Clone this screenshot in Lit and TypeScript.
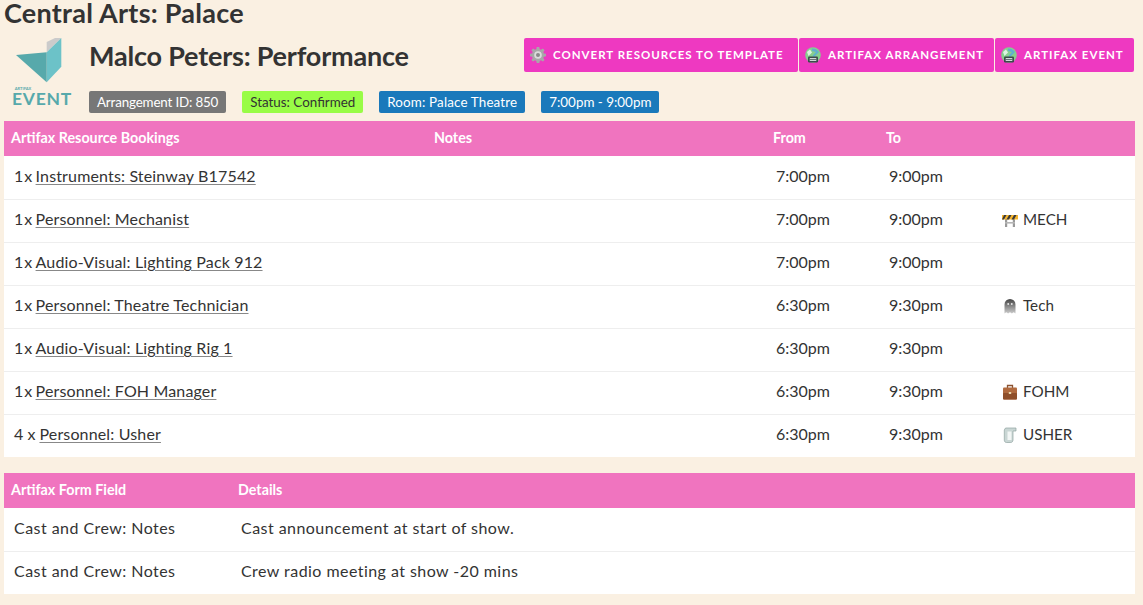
import { LitElement, html, css } from 'lit'
import { customElement } from 'lit/decorators.js'

const gear = html`<svg class="ico" viewBox="0 0 16 16"><path fill="#a8a8a8" d="M6.700 0h2.600l.4 2.200 1.300.6L12.900 1.500l1.700 1.700-1.300 1.900.6 1.300 2.100.4v2.500l-2.100.4-.6 1.300 1.300 1.900-1.700 1.700-1.900-1.300-1.300.6-.4 2.100H6.700l-.4-2.100-1.300-.6-1.900 1.300-1.700-1.700 1.300-1.900-.6-1.300L0 9.300V6.800l2.100-.4.6-1.300-1.300-1.900 1.700-1.700L5 2.800l1.300-.6z"/><circle cx="8" cy="8" r="3.800" fill="#dcdcdc"/><circle cx="8" cy="8" r="2" fill="#8a8a8a"/></svg>`

const globe = html`<svg class="ico" viewBox="0 0 16 16"><circle cx="8" cy="8" r="7.800" fill="#86cf8e"/><path fill="#5fb0cf" d="M7 1.500c3 0 5 1 7 3.500l-5 5-1.500-1L11 5 7 4z"/><path fill="#dff3e2" d="M2 5l3-2.500 2 3L3.500 9z"/><rect x="3" y="9.500" width="10" height="6" rx="1.200" fill="#3c4a4c"/><rect x="4.700" y="11" width="6.600" height="3" fill="#d0d8d8"/><path stroke="#3c4a4c" stroke-width=".7" d="M4.700 12.500h6.600"/></svg>`

const barrier = html`<svg class="emo" viewBox="0 0 16 16"><rect x="3" y="5" width="2.200" height="10" fill="#9a9a9a"/><rect x="10.800" y="5" width="2.200" height="10" fill="#9a9a9a"/><rect x="3" y="10" width="10" height="1.600" fill="#b5b5b5"/><rect x="0" y="3" width="16" height="4.500" fill="#f5b52e"/><path fill="#3a3a3a" d="M2 3h2.500L2 7.500H0zM7 3h2.500L7 7.500H4.500zM12 3h2.500L12 7.500H9.500z"/></svg>`

const ghost = html`<svg class="emo" viewBox="0 0 16 16"><defs><linearGradient id="gh" x1="0" x2="0" y1="0" y2="1"><stop offset="0" stop-color="#444"/><stop offset="1" stop-color="#ccc"/></linearGradient></defs><path fill="url(#gh)" d="M2.500 15.500V6.500a5.500 5.500 0 0 1 11 0v9l-1.800-1.200-1.800 1.200L8 14.300l-1.900 1.200-1.800-1.200z"/><circle cx="6.200" cy="6" r=".9" fill="#eee"/><circle cx="9.800" cy="6" r=".9" fill="#eee"/></svg>`

const briefcase = html`<svg class="emo" viewBox="0 0 16 16"><path fill="none" stroke="#8a5230" stroke-width="1.300" d="M5.500 4V1.500h5V4"/><rect x="1" y="3.500" width="14" height="12" rx="1" fill="#b06a3e"/><rect x="1" y="9" width="14" height="6.500" rx="1" fill="#8f4f2a"/><rect x="6.800" y="8" width="2.400" height="2" fill="#e8d9b0"/></svg>`

const scroll = html`<svg class="emo" viewBox="0 0 16 16"><path fill="#c9d6d4" stroke="#8fa3a0" stroke-width=".7" d="M3.500 1h10.500v3h-3v9c0 1.400-1 2.500-2.200 2.500H4.500c-1.300 0-2.200-1-2.200-2.300V3z"/><path fill="#f2f6f5" d="M5.500 4.500h4v8.500h-4z"/></svg>`

const logo = html`<svg viewBox="0 0 46 45" width="46" height="45">
  <path fill="#cbcbcb" d="M30.700 4L39 0h6.300L30.700 14.300z"/>
  <path fill="#6cc2c8" d="M45.300 0L30.700 14.300v30l14.600-15.600z"/>
  <path fill="#57a9ab" d="M0 17l30.700-2.700v30z"/>
</svg>`

const bookings: [string, string, string, string, unknown, string][] = [
  ['1 x', 'Instruments: Steinway B17542', '7:00pm', '9:00pm', null, ''],
  ['1 x', 'Personnel: Mechanist', '7:00pm', '9:00pm', barrier, 'MECH'],
  ['1 x', 'Audio-Visual: Lighting Pack 912', '7:00pm', '9:00pm', null, ''],
  ['1 x', 'Personnel: Theatre Technician', '6:30pm', '9:30pm', ghost, 'Tech'],
  ['1 x', 'Audio-Visual: Lighting Rig 1', '6:30pm', '9:30pm', null, ''],
  ['1 x', 'Personnel: FOH Manager', '6:30pm', '9:30pm', briefcase, 'FOHM'],
  ['4 x', 'Personnel: Usher', '6:30pm', '9:30pm', scroll, 'USHER'],
]

const fields = [
  ['Cast and Crew: Notes', 'Cast announcement at start of show.'],
  ['Cast and Crew: Notes', 'Crew radio meeting at show -20 mins'],
]

@customElement('app-root')
export class AppRoot extends LitElement {
  static styles = css`
    :host {
      display: block;
      min-height: 605px;
      background: #faf0e2;
      color: #333;
      font-family: Lato, "Noto Sans", sans-serif;
      overflow: hidden;
    }
    h1 {
      margin: 0 0 2px;
      padding-left: 4px;
      font-size: 27px;
      line-height: 25px;
      letter-spacing: 0.25px;
      font-weight: 700;
    }
    .head {
      display: flex;
      height: 94px;
      margin-right: 9px;
    }
    .logo {
      width: 89px;
      padding: 11px 11px 0 0;
      display: flex;
      flex-direction: column;
      align-items: center;
      box-sizing: border-box;
      flex: none;
    }
    .logo small {
      font-size: 4px;
      line-height: 5px;
      margin: 3px 0 0 -32px;
      color: #57a9ab;
      font-weight: 700;
    }
    .logo b {
      font-size: 17.500px;
      line-height: 15px;
      color: #57a9ab;
      letter-spacing: 0.7px;
      margin-left: 6px;
    }
    .main { flex: 1; display: flex; flex-direction: column; }
    .top { display: flex; justify-content: space-between; height: 64px; padding-top: 11px; box-sizing: border-box; }
    h2 {
      margin: -1px 0 0;
      font-size: 27px;
      line-height: 37px;
      font-weight: 700;
      letter-spacing: -0.2px;
    }
    .btns { display: flex; gap: 1px; }
    .btn {
      display: flex;
      align-items: center;
      gap: 7px;
      height: 34px;
      box-sizing: border-box;
      padding: 0 0 2px 6px;
      background: #ee39c1;
      color: #fff;
      border-radius: 2px;
      font-size: 11.500px;
      font-weight: 700;
      letter-spacing: 1px;
      white-space: nowrap;
    }
    .w1 { width: 274px; }
    .w2 { width: 195px; }
    .w3 { width: 139px; }
    .ico { width: 16px; height: 16px; flex: none; margin-top: 2px; }
    .badges { display: flex; gap: 16px; }
    .badge {
      height: 22px;
      line-height: 22px;
      padding: 0 8px;
      border-radius: 2px;
      font-size: 13.400px;
      color: #fff;
    }
    .grey { background: #777; letter-spacing: -0.17px; }
    .green { background: #99fc46; color: #333; }
    .blue { background: #1a79bb; }
    .room { letter-spacing: 0.15px; }
    table {
      display: table;
      width: 1131px;
      margin-left: 4px;
      border-collapse: collapse;
      table-layout: fixed;
      background: #fff;
    }
    th {
      height: 35px;
      padding: 0 7px 2px;
      box-sizing: border-box;
      background: #f074bf;
      color: #fff;
      text-align: left;
      font-size: 14.300px;
      font-weight: 700;
    }
    td {
      height: 43px;
      box-sizing: border-box;
      padding: 0 10px 4px;
      border-top: 1px solid #eee;
      font-size: 16px;
      white-space: nowrap;
    }
    tr:first-child td { border-top: 0; padding-bottom: 3px; }
    a {
      color: #333;
      letter-spacing: 0.15px;
      text-decoration: underline;
      text-decoration-color: #888;
      text-underline-offset: 2px;
    }
    .one { letter-spacing: -0.8px; word-spacing: -1.500px; }
    .tag { font-size: 15.200px; }
    .emo { width: 16px; height: 16px; vertical-align: -3px; margin-right: 5px; }
    .second { margin-top: 16px; }
    .second td { letter-spacing: 0.45px; }
  `

  protected render(): unknown {
    return html`
      <h1>Central Arts: Palace</h1>
      <div class="head">
        <div class="logo">
          ${logo}
          <small>ARTIFAX</small>
          <b>EVENT</b>
        </div>
        <div class="main">
          <div class="top">
            <h2>Malco Peters: Performance</h2>
            <div class="btns">
              <div class="btn w1">${gear}CONVERT RESOURCES TO TEMPLATE</div>
              <div class="btn w2">${globe}ARTIFAX ARRANGEMENT</div>
              <div class="btn w3">${globe}ARTIFAX EVENT</div>
            </div>
          </div>
          <div class="badges">
            <span class="badge grey">Arrangement ID: 850</span>
            <span class="badge green">Status: Confirmed</span>
            <span class="badge blue room">Room: Palace Theatre</span>
            <span class="badge blue">7:00pm - 9:00pm</span>
          </div>
        </div>
      </div>
      <table>
        <colgroup>
          <col style="width:423px" /><col style="width:339px" /><col style="width:113px" /><col style="width:113px" /><col />
        </colgroup>
        <thead>
          <tr><th>Artifax Resource Bookings</th><th>Notes</th><th>From</th><th>To</th><th></th></tr>
        </thead>
        <tbody>
          ${bookings.map(([qty, name, from, to, icon, tag]) => html`
            <tr>
              <td><span class=${qty === '1 x' ? 'one' : ''}>${qty}</span> <a>${name}</a></td>
              <td></td>
              <td>${from}</td>
              <td>${to}</td>
              <td>${icon}<span class="tag">${tag}</span></td>
            </tr>`)}
        </tbody>
      </table>
      <table class="second">
        <colgroup><col style="width:227px" /><col /></colgroup>
        <thead><tr><th>Artifax Form Field</th><th>Details</th></tr></thead>
        <tbody>
          ${fields.map(([a, b]) => html`<tr><td>${a}</td><td>${b}</td></tr>`)}
        </tbody>
      </table>
    `
  }
}

declare global {
  interface HTMLElementTagNameMap {
    'app-root': AppRoot
  }
}
